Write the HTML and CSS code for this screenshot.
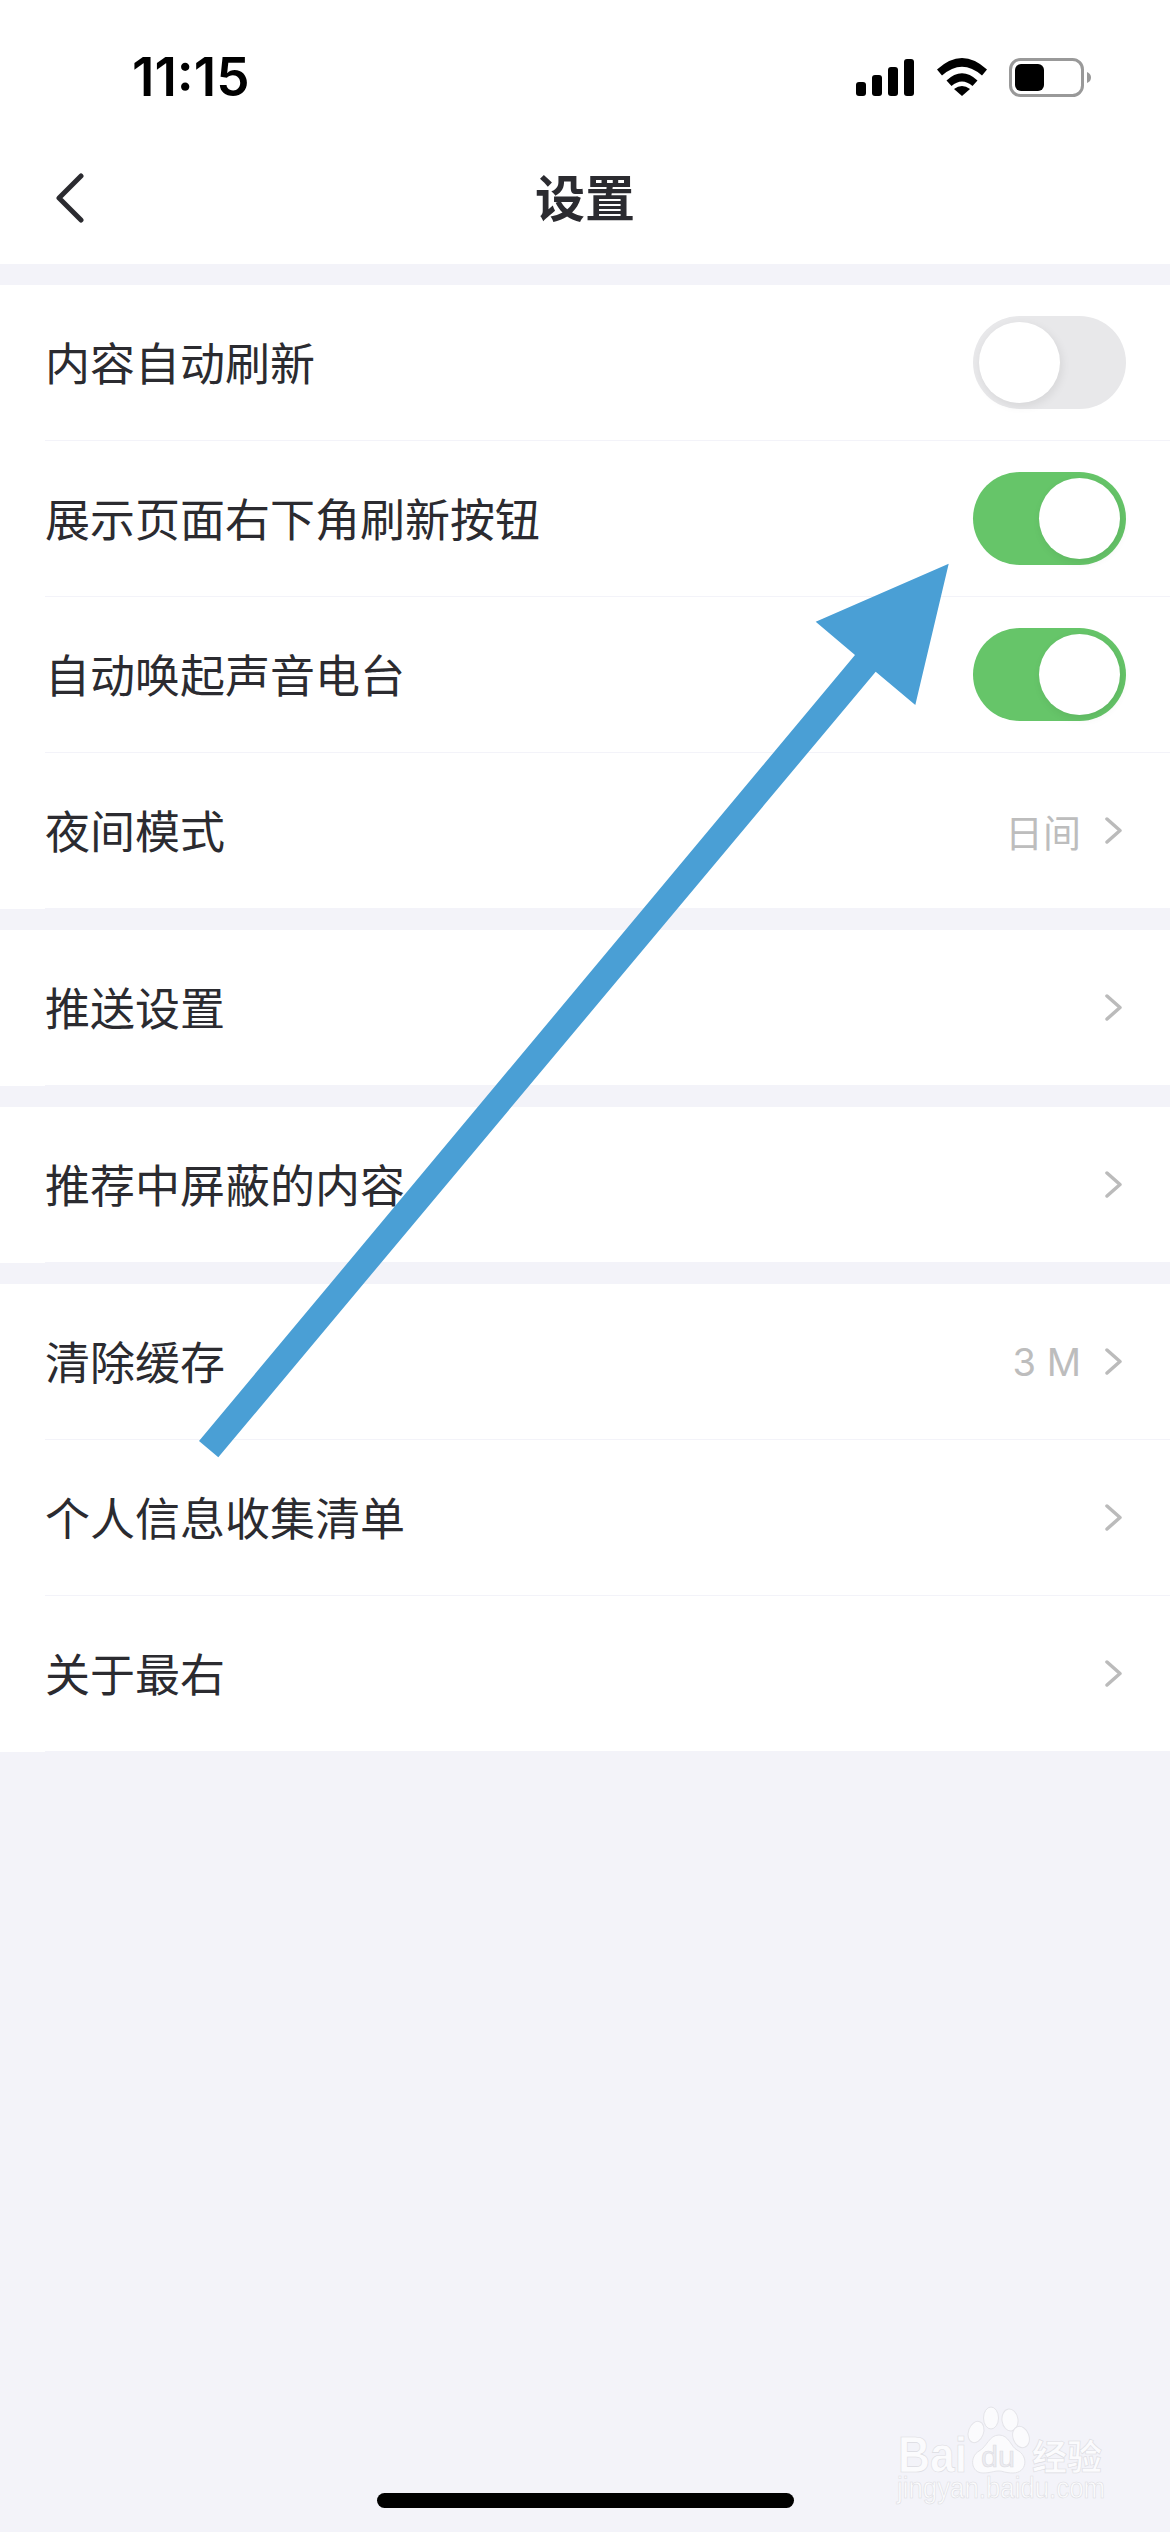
FILE: index.html
```html
<!DOCTYPE html>
<html lang="zh-CN">
<head>
<meta charset="utf-8">
<title>设置</title>
<link rel="stylesheet" href="styles.css">
</head>
<body>
<div class="page">
  <header class="header">
    <div class="status">
      <span class="time">11:15</span>
      <div class="status-icons">
        <svg class="signal" width="58" height="37" viewBox="0 0 58 37"><rect x="0" y="23" width="10" height="14" rx="3"/><rect x="16" y="16" width="10" height="21" rx="3"/><rect x="32" y="8" width="10" height="29" rx="3"/><rect x="48" y="0" width="10" height="37" rx="3"/></svg>
        <svg class="wifi" width="50" height="38" viewBox="0 0 50 38"><path d="M0 11.5Q25-11.5 50 11.5L45 17.5Q25 0 5 17.5Z"/><path d="M9.5 22.5Q25 8 40.500 22.500L35.500 28Q25 19 14.500 28Z"/><path d="M25 38L17 31Q25 25 33 31Z"/></svg>
        <svg class="battery" width="83" height="39" viewBox="0 0 83 39"><rect x="1.500" y="1.500" width="72" height="36" rx="10" class="battery-shell"/><rect x="6" y="6" width="29" height="27" rx="6"/><path d="M78 14Q82 15.500 82 19.500Q82 23.500 78 25Z" class="battery-nub"/></svg>
      </div>
    </div>
    <nav class="nav">
      <svg class="back" width="30" height="50" viewBox="0 0 30 50"><path d="M26 3L4 25L26 47"/></svg>
      <h1 class="title">设置</h1>
      <span></span>
    </nav>
  </header>

  <section class="group">
    <div class="row"><span class="label">内容自动刷新</span><span class="toggle"><span class="knob"></span></span></div>
    <div class="row"><span class="label">展示页面右下角刷新按钮</span><span class="toggle on"><span class="knob"></span></span></div>
    <div class="row"><span class="label">自动唤起声音电台</span><span class="toggle on"><span class="knob"></span></span></div>
    <div class="row"><span class="label">夜间模式</span><span class="right"><span class="value">日间</span><svg class="chev" width="18" height="27" viewBox="0 0 18 27"><path d="M2 2L15 13.500L2 25"/></svg></span></div>
  </section>
  <section class="group">
    <div class="row"><span class="label">推送设置</span><span class="right"><svg class="chev" width="18" height="27" viewBox="0 0 18 27"><path d="M2 2L15 13.500L2 25"/></svg></span></div>
  </section>
  <section class="group">
    <div class="row"><span class="label">推荐中屏蔽的内容</span><span class="right"><svg class="chev" width="18" height="27" viewBox="0 0 18 27"><path d="M2 2L15 13.500L2 25"/></svg></span></div>
  </section>
  <section class="group">
    <div class="row"><span class="label">清除缓存</span><span class="right"><span class="value latin">3 M</span><svg class="chev" width="18" height="27" viewBox="0 0 18 27"><path d="M2 2L15 13.500L2 25"/></svg></span></div>
    <div class="row"><span class="label">个人信息收集清单</span><span class="right"><svg class="chev" width="18" height="27" viewBox="0 0 18 27"><path d="M2 2L15 13.500L2 25"/></svg></span></div>
    <div class="row"><span class="label">关于最右</span><span class="right"><svg class="chev" width="18" height="27" viewBox="0 0 18 27"><path d="M2 2L15 13.500L2 25"/></svg></span></div>
  </section>

  <svg class="arrow" width="1170" height="2532" viewBox="0 0 1170 2532"><polygon points="948.700,563.700 915.300,705 875.700,671.700 218.300,1457.300 199,1441 855,655 815.700,621.700"/></svg>

  <svg class="watermark" width="210" height="95" viewBox="0 0 210 95">
    <g class="wm-shape">
      <ellipse cx="79" cy="27" rx="7.500" ry="11" transform="rotate(20 79 27)"/>
      <ellipse cx="94" cy="13" rx="7.500" ry="11"/>
      <ellipse cx="113" cy="15" rx="8" ry="11" transform="rotate(-8 113 15)"/>
      <ellipse cx="124" cy="32" rx="8" ry="11" transform="rotate(-20 124 32)"/>
      <path d="M86 68C74 68 72 52 82 46C90 42 92 30 102 30C112 30 114 42 120 45C132 51 130 68 116 68C108 68 106 66 102 66C96 66 94 68 86 68Z"/>
    </g>
    <text x="1" y="67" class="wm-bai" textLength="69" lengthAdjust="spacingAndGlyphs">Bai</text>
    <text x="84" y="62" class="wm-du" textLength="34" lengthAdjust="spacingAndGlyphs">du</text>
    <text x="135" y="65" class="wm-cn">经验</text>
    <text x="0" y="93" class="wm-url" textLength="208" lengthAdjust="spacingAndGlyphs">jingyan.baidu.com</text>
  </svg>

  <div class="home"></div>
</div>
</body>
</html>
```
FILE: styles.css
```css
* { box-sizing: border-box; }
html, body { margin: 0; padding: 0; }
body {
  width: 1170px;
  height: 2532px;
  background: #f3f3f9;
  font-family: "Noto Sans CJK SC", "Noto Sans", sans-serif;
  color: #2b2b30;
  overflow: hidden;
}
.page { position: relative; width: 1170px; height: 2532px; }

.header { background: #fff; height: 264px; }
.status {
  height: 132px;
  display: flex;
  justify-content: space-between;
  padding: 58px 78px 0 132px;
}
.time {
  font-family: Inter, "Liberation Sans", sans-serif;
  font-weight: 600;
  font-size: 53px;
  line-height: 39px;
  color: #000;
  letter-spacing: 0;
}
.status-icons { display: flex; align-items: flex-start; }
.signal { margin-top: 1px; }
.signal rect, .wifi path, .battery rect { fill: #000; }
.wifi { margin-left: 23px; }
.battery { margin-left: 22px; }
.battery .battery-shell { fill: none; stroke: #999; stroke-width: 3; }
.battery-nub { fill: #999; }

.nav {
  height: 132px;
  display: grid;
  grid-template-columns: 1fr auto 1fr;
  align-items: center;
  padding: 0 55px 4px;
}
.back { fill: none; stroke: #2b2b30; stroke-width: 5; stroke-linecap: round; stroke-linejoin: round; margin-top: 4px; }
.title { margin: 0 0 2px; font-size: 50px; font-weight: 700; line-height: 60px; color: #2b2b30; }

.group { background: #fff; margin-top: 21px; padding-left: 45px; }
.row {
  height: 156px;
  display: flex;
  align-items: center;
  justify-content: space-between;
  border-bottom: 1px solid #f3f3f9;
  padding-right: 44px;
}
.label { font-size: 45px; line-height: 60px; margin-bottom: 2px; }
.right { display: flex; align-items: center; }
.value { font-size: 38px; color: #bdbdbd; margin-right: 24px; }
.value.latin { font-family: Inter, "Liberation Sans", sans-serif; letter-spacing: 0; font-size: 38px; }
.chev { fill: none; stroke: #bbbbbb; stroke-width: 3.500; stroke-linecap: round; stroke-linejoin: round; margin-right: 3px; }

.toggle {
  width: 153px;
  height: 93px;
  border-radius: 46.500px;
  background: #e8e8ea;
  padding: 6px;
  display: flex;
  justify-content: flex-start;
}
.toggle.on { background: #66c569; justify-content: flex-end; }
.knob {
  width: 81px;
  height: 81px;
  border-radius: 50%;
  background: #fff;
  box-shadow: 2px 3px 10px rgba(0, 0, 0, 0.08);
}

.arrow { position: absolute; left: 0; top: 0; pointer-events: none; }
.arrow polygon { fill: #4a9fd5; }

.watermark { position: absolute; left: 897px; top: 2405px; overflow: visible; }
.wm-shape { fill: #fbfbfd; stroke: #e4e4e9; stroke-width: 1; }
.watermark text { fill: #fbfbfd; stroke: #dcdce2; stroke-width: 0.600; }
.wm-bai { font-family: "Liberation Sans", sans-serif; font-weight: 700; font-size: 50px; }
.watermark .wm-du { font-family: "Liberation Sans", sans-serif; font-size: 30px; fill: #ececf1; }
.wm-cn { font-family: "Noto Sans CJK SC", sans-serif; font-weight: 700; font-size: 35px; }
.wm-url { font-family: "Liberation Sans", sans-serif; font-size: 30px; }

.home {
  position: absolute;
  left: 377px;
  top: 2493px;
  width: 417px;
  height: 15px;
  border-radius: 7.500px;
  background: #000;
}
```
